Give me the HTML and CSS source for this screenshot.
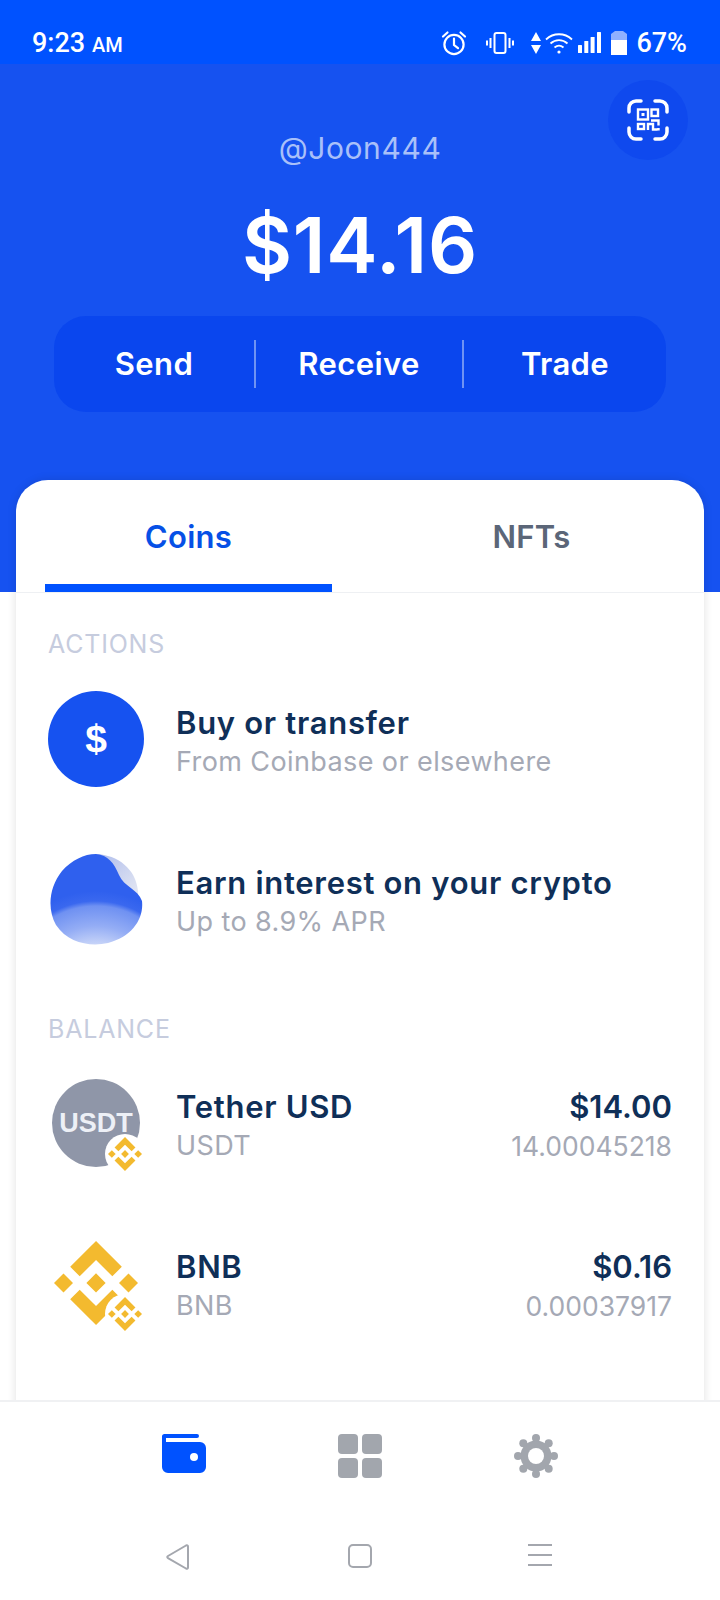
FILE: index.html
```html
<!DOCTYPE html>
<html>
	<head>
		<title>Wallet</title>
		<link rel="stylesheet" href="styles.css">
	</head>
	<body>
		<svg class="defs" width="0" height="0">
			<symbol id="bnb" viewBox="0 0 126.61 126.61">
				<path d="M38.73 53.2l24.59-24.58 24.6 24.6 14.3-14.31L63.32 0 24.43 38.9l14.3 14.3z"/>
				<path d="M0 63.31l14.3-14.31 14.31 14.31-14.31 14.3z"/>
				<path d="M38.73 73.41l24.59 24.59 24.6-24.6 14.31 14.29-38.9 38.91-38.91-38.88-.02-.02z"/>
				<path d="M98 63.31l14.3-14.31 14.31 14.3-14.31 14.32z"/>
				<path d="M77.83 63.3L63.32 48.78 52.59 59.51l-1.24 1.23-2.54 2.54 14.51 14.5 14.51-14.47z"/>
			</symbol>
		</svg>

		<div class="status">
			<div class="clock">9:23 <small>AM</small></div>
			<div class="status-icons">
				<svg class="ic-alarm" width="26" height="26" viewBox="0 0 26 26" fill="none" stroke="#fff" stroke-width="2.2">
					<circle cx="13" cy="14.5" r="9.6"/>
					<path d="M13 8.5v6.5l4 3.2M2 6.5L6.5 2.5M24 6.5L19.5 2.5" stroke-linecap="round"/>
				</svg>
				<svg class="ic-vibrate" width="28" height="22" viewBox="0 0 28 22" fill="none" stroke="#fff" stroke-width="2">
					<rect x="8.5" y="1" width="11" height="20" rx="2"/>
					<path d="M4.5 6v10M1 8.5v5M23.5 6v10M27 8.5v5"/>
				</svg>
				<svg class="ic-arrows" width="10" height="22" viewBox="0 0 10 22" fill="#fff">
					<path d="M5 0l5 9H0zM5 22L0 13h10z"/>
				</svg>
				<svg class="ic-wifi" width="28" height="22" viewBox="0 0 28 22" fill="none" stroke="#fff" stroke-width="1.8">
					<path d="M1 7.5C8.500 .5 19.500 .5 27 7.500M5.500 11.500C10.500 7 17.500 7 22.500 11.500M9.500 15.500C12.200 13.300 15.800 13.300 18.500 15.500"/>
					<circle cx="14" cy="20" r="1.6" fill="#fff" stroke="none"/>
				</svg>
				<svg class="ic-signal" width="23" height="21" viewBox="0 0 23 21" fill="#fff">
					<rect x="0" y="13" width="4" height="8" rx=".5"/>
					<rect x="6.300" y="9" width="4" height="12" rx=".5"/>
					<rect x="12.600" y="5" width="4" height="16" rx=".5"/>
					<rect x="19" y="0" width="4" height="21" rx=".5"/>
				</svg>
				<svg class="ic-battery" width="16" height="24" viewBox="0 0 16 24">
					<path d="M4 0h8l4 3v8H0V3z" fill="#8fb0ff"/>
					<path d="M0 9h16v15H0z" fill="#fff"/>
				</svg>
				<span class="pct">67%</span>
			</div>
		</div>

		<main class="screen">
			<section class="hero">
				<button class="qr-btn">
					<svg width="42" height="42" viewBox="0 0 42 42" fill="none" stroke="#fff">
						<path d="M2 13V9a7 7 0 0 1 7-7h5M28 2h5a7 7 0 0 1 7 7v4M40 29v4a7 7 0 0 1-7 7h-5M14 40H9a7 7 0 0 1-7-7v-4" stroke-width="3.500" stroke-linecap="round"/>
						<rect x="11" y="10.500" width="10" height="10" stroke-width="2.400"/>
						<rect x="14.500" y="14" width="3" height="3" fill="#fff" stroke="none"/>
						<rect x="24.500" y="10.500" width="6.500" height="6.500" stroke-width="2.400"/>
						<rect x="11" y="25" width="6" height="5" stroke-width="2.400"/>
						<path d="M24 21.500h7.500v5M21 31v-6h5v5.500h4.500M31.500 29v2.500" stroke-width="2.400"/>
					</svg>
				</button>
				<div class="handle">@Joon444</div>
				<div class="total">$14.16</div>
				<div class="actions">
					<div class="action">Send</div>
					<div class="action">Receive</div>
					<div class="action">Trade</div>
				</div>
			</section>

			<section class="card">
				<div class="tabs">
					<div class="tab active">Coins</div>
					<div class="tab">NFTs</div>
				</div>
				<div class="list">
					<div class="label">ACTIONS</div>
					<div class="row">
						<div class="icon dollar">$</div>
						<div class="text">
							<div class="title">Buy or transfer</div>
							<div class="sub">From Coinbase or elsewhere</div>
						</div>
					</div>
					<div class="row">
						<div class="icon">
							<svg width="96" height="96" viewBox="0 0 96 96">
								<defs>
									<radialGradient id="blobfill" gradientUnits="userSpaceOnUse" cx="48" cy="140" r="100">
										<stop offset=".47" stop-color="#c6d3f8"/>
										<stop offset=".65" stop-color="#94adf5"/>
										<stop offset=".85" stop-color="#6f91f2"/>
										<stop offset=".9" stop-color="#3a68ef"/>
										<stop offset="1" stop-color="#2f60ee"/>
									</radialGradient>
									<linearGradient id="blobrim" x1="0" y1="0" x2="1" y2="1">
										<stop offset="0" stop-color="#aebcec"/>
										<stop offset="1" stop-color="#e6e9f3"/>
									</linearGradient>
								</defs>
								<path d="M48 3C70 4 88 18 90 40C91 50 84 48 78 38C70 24 62 10 48 3Z" fill="url(#blobrim)"/>
								<path d="M48 3C60 4 66 12 71 24C76 36 90 38 94 50C96 68 84 86 60 92C42 96 20 92 8 74C-1 58 1 36 14 20C24 9 36 3 48 3Z" fill="url(#blobfill)"/>
							</svg>
						</div>
						<div class="text">
							<div class="title">Earn interest on your crypto</div>
							<div class="sub">Up to 8.9% APR</div>
						</div>
					</div>

					<div class="label balance-label">BALANCE</div>
					<div class="row">
						<div class="icon">
							<div class="usdt">USDT</div>
							<span class="badge"><svg width="34" height="34"><use href="#bnb"/></svg></span>
						</div>
						<div class="text">
							<div class="title">Tether USD</div>
							<div class="sub">USDT</div>
						</div>
						<div class="text right">
							<div class="title">$14.00</div>
							<div class="sub">14.00045218</div>
						</div>
					</div>
					<div class="row">
						<div class="icon">
							<svg class="bnb-big" width="84" height="84"><use href="#bnb"/></svg>
							<span class="badge"><svg width="34" height="34"><use href="#bnb"/></svg></span>
						</div>
						<div class="text">
							<div class="title">BNB</div>
							<div class="sub">BNB</div>
						</div>
						<div class="text right">
							<div class="title">$0.16</div>
							<div class="sub">0.00037917</div>
						</div>
					</div>
				</div>
			</section>
		</main>

		<nav class="nav">
			<svg width="44" height="40" viewBox="0 0 44 40" fill="#0052ff">
				<path d="M2.500 0H35a2 2 0 0 1 0 4H4v4h34a6 6 0 0 1 6 6v19a6 6 0 0 1-6 6H6a6 6 0 0 1-6-6V2.500A2.500 2.500 0 0 1 2.500 0z"/>
				<circle cx="32" cy="23" r="4" fill="#fff"/>
			</svg>
			<svg width="44" height="44" viewBox="0 0 44 44" fill="#a2a6ad">
				<rect width="20" height="20" rx="4"/>
				<rect x="24" width="20" height="20" rx="4"/>
				<rect y="24" width="20" height="20" rx="4"/>
				<rect x="24" y="24" width="20" height="20" rx="4"/>
			</svg>
			<svg width="44" height="44" viewBox="0 0 44 44">
				<circle cx="22" cy="22" r="15.500" fill="#a2a6ad"/>
				<g fill="#a2a6ad">
					<circle cx="22" cy="4" r="4"/>
					<circle cx="22" cy="40" r="4"/>
					<circle cx="4" cy="22" r="4"/>
					<circle cx="40" cy="22" r="4"/>
					<circle cx="9.300" cy="9.300" r="4"/>
					<circle cx="34.700" cy="9.300" r="4"/>
					<circle cx="9.300" cy="34.700" r="4"/>
					<circle cx="34.700" cy="34.700" r="4"/>
				</g>
				<circle cx="22" cy="22" r="8" fill="#fff"/>
			</svg>
		</nav>

		<div class="sysbar">
			<svg width="24" height="26" viewBox="0 0 24 26" fill="none" stroke="#a4a7ae" stroke-width="2" stroke-linejoin="round">
				<path d="M22 2.500c0-1-1-1.500-2-1L2 12c-1 .6-1 1.600 0 2.200l18 10.300c1 .5 2 0 2-1z"/>
			</svg>
			<svg width="24" height="24" viewBox="0 0 24 24" fill="none" stroke="#a4a7ae" stroke-width="2">
				<rect x="1" y="1" width="22" height="22" rx="4"/>
			</svg>
			<svg class="sys-menu" width="24" height="22" viewBox="0 0 24 22" fill="none" stroke="#a4a7ae" stroke-width="2">
				<path d="M0 1h24M0 11h24M0 21h24"/>
			</svg>
		</div>
	</body>
</html>
```

FILE: styles.css
```css
* {
	margin: 0; padding: 0;
	box-sizing: border-box;
}

body {
	width: 720px;
	height: 1600px;
	overflow: hidden;
	background: #fff;
	font-family: "Inter", sans-serif;
	display: flex;
	flex-direction: column;
}

.defs {
	position: absolute;
}

.status {
	height: 64px;
	flex: none;
	background: #0052ff;
	color: #fff;
	font-family: "Roboto", sans-serif;
	font-weight: 500;
	display: flex;
	align-items: center;
	justify-content: space-between;
	padding: 21px 33px 0 32px;
}

.clock {
	font-size: 27px;
}

.clock small {
	font-size: 20px;
}

.status-icons {
	display: flex;
	align-items: center;
}

.ic-vibrate { margin-left: 19px; }
.ic-arrows { margin-left: 17px; }
.ic-wifi { margin-left: 4px; }
.ic-signal { margin-left: 5px; }
.ic-battery { margin-left: 10px; }

.pct {
	font-size: 27px;
	margin-left: 9px;
}

.screen {
	height: 1336px;
	flex: none;
	overflow: hidden;
}

.hero {
	position: relative;
	height: 528px;
	background: #1652f0;
	color: #fff;
	padding-top: 64px;
	text-align: center;
}

.qr-btn {
	position: absolute;
	top: 16px;
	left: 608px;
	width: 80px;
	height: 80px;
	border: none;
	border-radius: 50%;
	background: #0f49ee;
	display: flex;
	align-items: center;
	justify-content: center;
}

.handle {
	font-size: 30px;
	line-height: 40px;
	letter-spacing: .6px;
	color: #a9c0f9;
}

.total {
	margin-top: 32px;
	font-size: 77px;
	line-height: 90px;
	font-weight: 600;
	letter-spacing: .9px;
}

.actions {
	margin: 26px 54px 0;
	height: 96px;
	border-radius: 32px;
	background: #0a46ee;
	display: grid;
	grid-template-columns: 202px 208px 202px;
	align-items: center;
}

.action {
	font-size: 31px;
	line-height: 48px;
	font-weight: 600;
	letter-spacing: .4px;
	border-right: 2px solid #6f93f3;
}

.action:last-child {
	border-right: none;
}

.card {
	margin: -112px 16px 0;
	position: relative;
	background: #fff;
	border-radius: 32px 32px 0 0;
	box-shadow: 0 0 10px rgba(0, 0, 0, 0.12);
	height: 940px;
}

.tabs {
	display: grid;
	grid-template-columns: 1fr 1fr;
	gap: 56px;
	padding: 0 29px;
	height: 113px;
	border-bottom: 1px solid #eef0f3;
}

.tab {
	font-size: 31px;
	font-weight: 600;
	letter-spacing: .3px;
	color: #5b6678;
	text-align: center;
	padding-top: 38px;
	height: 112px;
}

.tab.active {
	color: #0650e6;
	border-bottom: 8px solid #0052ff;
}

.list {
	padding: 36px 32px 0;
}

.label {
	font-size: 25px;
	line-height: 31px;
	letter-spacing: .8px;
	color: #c6ccde;
	margin-bottom: -1px;
}

.balance-label {
	margin-top: 35px;
	margin-bottom: -2px;
}

.row {
	height: 160px;
	display: flex;
	align-items: center;
}

.icon {
	position: relative;
	width: 96px;
	height: 96px;
	flex: none;
	margin-right: 32px;
	display: flex;
	align-items: center;
	justify-content: center;
}

.dollar {
	border-radius: 50%;
	background: #1652f0;
	color: #fff;
	font-family: "Liberation Sans", sans-serif;
	font-size: 39px;
	font-weight: 700;
}

.usdt {
	width: 88px;
	height: 88px;
	border-radius: 50%;
	background: #8f96a8;
	color: #edf0f6;
	font-family: "Liberation Sans", sans-serif;
	font-size: 27px;
	font-weight: 700;
	display: flex;
	align-items: center;
	justify-content: center;
}

.bnb-big {
	fill: #f3ba2f;
}

.badge {
	position: absolute;
	left: 57px;
	top: 59px;
	width: 40px;
	height: 40px;
	border-radius: 50%;
	background: #fff;
	fill: #f3ba2f;
	display: flex;
	align-items: center;
	justify-content: center;
}

.text {
	padding-top: 7px;
	flex: 1;
}

.text.right {
	text-align: right;
	flex: none;
}

.title {
	font-size: 31px;
	line-height: 38px;
	font-weight: 600;
	letter-spacing: .7px;
	color: #0f2f58;
}

.sub {
	font-size: 27px;
	line-height: 40px;
	letter-spacing: .4px;
	color: #a5a9b5;
}

.right .title {
	letter-spacing: 0;
}

.right .sub {
	font-size: 26.5px;
	letter-spacing: 0;
}

.nav {
	height: 120px;
	flex: none;
	position: relative;
	background: #fff;
	border-top: 2px solid #f0f1f3;
	display: grid;
	grid-template-columns: 44px 44px 44px;
	justify-content: center;
	column-gap: 132px;
	align-items: start;
	padding-top: 32px;
}

.sysbar {
	height: 80px;
	flex: none;
	background: #fff;
	display: grid;
	grid-template-columns: 24px 24px 24px;
	justify-content: center;
	column-gap: 158px;
	align-items: start;
	padding-top: 24px;
}

.sys-menu {
	margin-left: -2px;
}
```
